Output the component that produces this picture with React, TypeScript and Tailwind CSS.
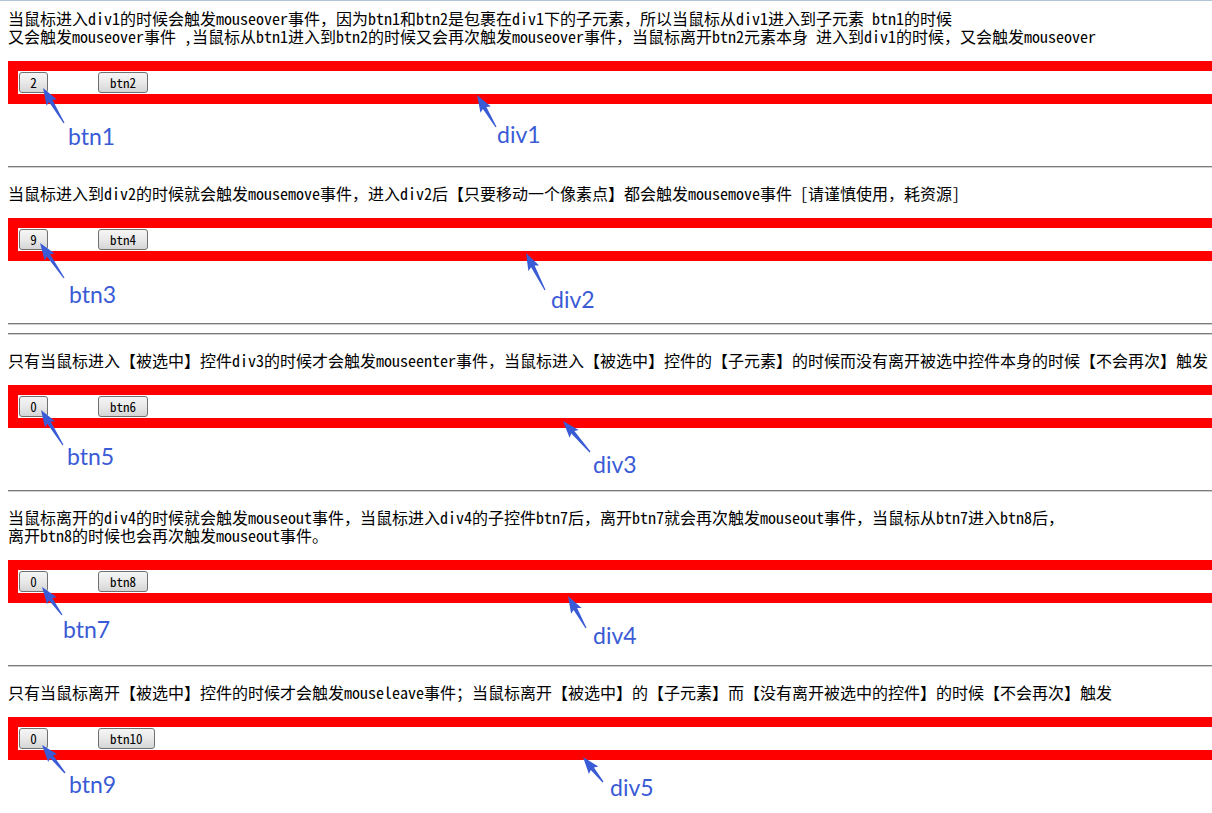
const mono = "font-['Noto_Sans_Mono_CJK_SC','Noto_Sans_CJK_SC',monospace]"

type Sec = {
  lines: string[]
  a: string
  b: string
}

const SECTIONS: Sec[] = [
  {
    lines: [
      '当鼠标进入div1的时候会触发mouseover事件，因为btn1和btn2是包裹在div1下的子元素，所以当鼠标从div1进入到子元素 btn1的时候',
      '又会触发mouseover事件 ,当鼠标从btn1进入到btn2的时候又会再次触发mouseover事件，当鼠标离开btn2元素本身 进入到div1的时候，又会触发mouseover',
    ],
    a: '2',
    b: 'btn2',
  },
  {
    lines: ['当鼠标进入到div2的时候就会触发mousemove事件，进入div2后【只要移动一个像素点】都会触发mousemove事件 [请谨慎使用，耗资源]'],
    a: '9',
    b: 'btn4',
  },
  {
    lines: ['只有当鼠标进入【被选中】控件div3的时候才会触发mouseenter事件，当鼠标进入【被选中】控件的【子元素】的时候而没有离开被选中控件本身的时候【不会再次】触发'],
    a: '0',
    b: 'btn6',
  },
  {
    lines: [
      '当鼠标离开的div4的时候就会触发mouseout事件，当鼠标进入div4的子控件btn7后，离开btn7就会再次触发mouseout事件，当鼠标从btn7进入btn8后，',
      '离开btn8的时候也会再次触发mouseout事件。',
    ],
    a: '0',
    b: 'btn8',
  },
  {
    lines: ['只有当鼠标离开【被选中】控件的时候才会触发mouseleave事件；当鼠标离开【被选中】的【子元素】而【没有离开被选中的控件】的时候【不会再次】触发'],
    a: '0',
    b: 'btn10',
  },
]

// annotation arrows: tail -> tip, label next to tail
const NOTES = [
  { t: 'btn1', tip: [43, 88], tail: [64, 123], x: 68, y: 127 },
  { t: 'div1', tip: [477, 95], tail: [496, 127], x: 497, y: 125 },
  { t: 'btn3', tip: [40, 243], tail: [64, 278], x: 69, y: 285 },
  { t: 'div2', tip: [526, 253], tail: [545, 290], x: 551, y: 290 },
  { t: 'btn5', tip: [41, 410], tail: [63, 445], x: 67, y: 447 },
  { t: 'div3', tip: [563, 421], tail: [590, 452], x: 593, y: 455 },
  { t: 'btn7', tip: [42, 587], tail: [62, 615], x: 63, y: 620 },
  { t: 'div4', tip: [568, 596], tail: [586, 628], x: 593, y: 626 },
  { t: 'btn9', tip: [42, 745], tail: [65, 773], x: 69, y: 775 },
  { t: 'div5', tip: [583, 757], tail: [603, 782], x: 610, y: 778 },
]

function arrowPoints(tip: number[], tail: number[]) {
  const dx = tip[0] - tail[0]
  const dy = tip[1] - tail[1]
  const len = Math.hypot(dx, dy)
  const ux = dx / len
  const uy = dy / len
  const nx = -uy
  const ny = ux
  const bx = tip[0] - ux * 15
  const by = tip[1] - uy * 15
  const p = (x: number, y: number) => `${x.toFixed(1)},${y.toFixed(1)}`
  return [
    p(tail[0] + nx * 0.6, tail[1] + ny * 0.6),
    p(bx + nx * 2, by + ny * 2),
    p(bx + nx * 6 - ux * 2, by + ny * 6 - uy * 2),
    p(tip[0], tip[1]),
    p(bx - nx * 6 - ux * 2, by - ny * 6 - uy * 2),
    p(bx - nx * 2, by - ny * 2),
    p(tail[0] - nx * 0.6, tail[1] - ny * 0.6),
  ].join(' ')
}

function Btn({ children, narrow }: { children: string; narrow?: boolean }) {
  return (
    <button
      type="button"
      className={`${mono} h-[21px] rounded-[3px] border border-[#707070] bg-linear-to-b from-[#f5f5f5] via-[#e9e9e9] to-[#d5d5d5] text-[13px] leading-none text-black ${narrow ? 'w-[29px] px-0' : 'px-[11px]'}`}
    >
      {children}
    </button>
  )
}

function Rule() {
  return <div className="h-[2px] border-t border-b border-t-[#7b7b7b] border-b-[#cfcfcf]" />
}

export default function App() {
  return (
    <div className="relative min-h-[813px] w-full overflow-hidden bg-white">
      <div className="h-px bg-[#b3c3da]" />
      <div className={`${mono} w-[1260px] pl-2 text-[16px] leading-[18px] text-black`}>
        {SECTIONS.map((s, i) => (
          <div key={i}>
            {i > 0 && (
              <>
                <Rule />
                {i === 2 && (
                  <div className="mt-2">
                    <Rule />
                  </div>
                )}
              </>
            )}
            <div className={i === 0 ? 'mt-2' : 'mt-4'}>
              {s.lines.map((l) => (
                <div key={l} className="whitespace-pre">
                  {l}
                </div>
              ))}
            </div>
            <div className="mt-4 mb-[62px] flex gap-[50px] border-[10px] border-r-0 border-[#ff0000] bg-white p-px">
              <Btn narrow>{s.a}</Btn>
              <Btn>{s.b}</Btn>
            </div>
          </div>
        ))}
      </div>
      <svg className="pointer-events-none absolute top-0 left-0" width="1212" height="813">
        {NOTES.map((n) => (
          <polygon key={n.t} points={arrowPoints(n.tip, n.tail)} fill="#3a5bd6" />
        ))}
      </svg>
      {NOTES.map((n) => (
        <div
          key={n.t}
          className="absolute font-['Lato',sans-serif] text-[23px] leading-none text-[#3a5bd6]"
          style={{ left: n.x, top: n.y - 2 }}
        >
          {n.t}
        </div>
      ))}
    </div>
  )
}
